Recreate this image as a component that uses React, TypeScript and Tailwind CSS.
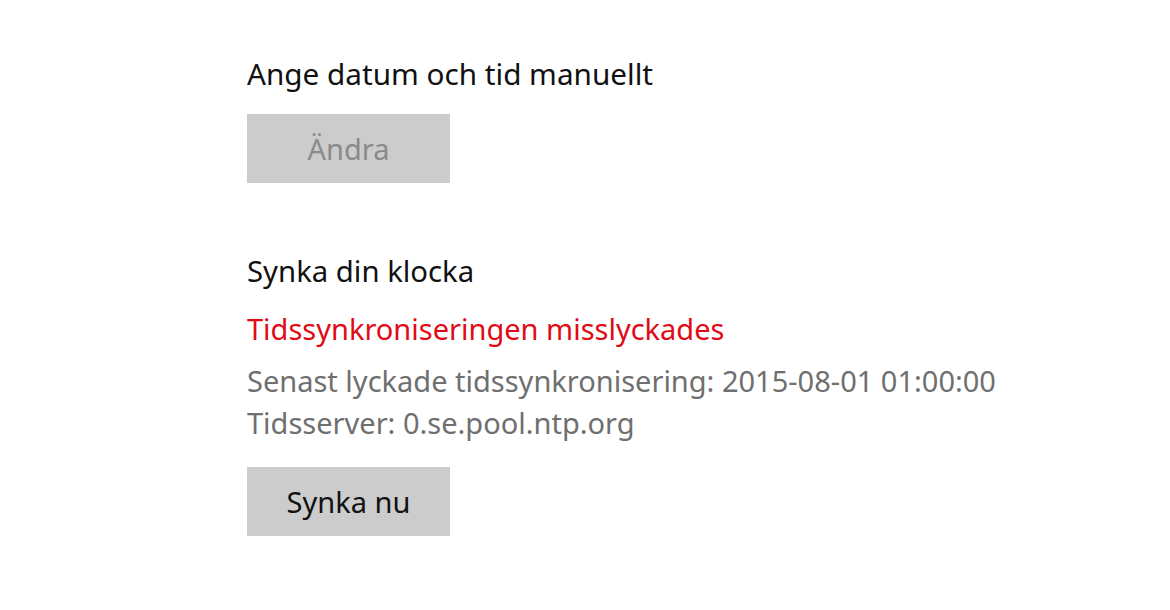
const App = () => {
  return (
    <div
      className="w-[1170px] h-[610px] bg-white pl-[247px] pt-[56px]"
      style={{ fontFamily: '"Noto Sans", "Open Sans", sans-serif' }}
    >
      <h2 className="text-[29.7px] leading-[36px] text-[#111]">Ange datum och tid manuellt</h2>
      <button
        disabled
        className="mt-[22px] w-[203px] h-[69px] bg-[#cccccc] text-[29px] text-[#8a8a8a] flex items-center justify-center"
      >
        Ändra
      </button>

      <h2 className="mt-[70px] text-[29.3px] leading-[36px] text-[#111]">Synka din klocka</h2>
      <p className="mt-[22px] text-[29px] leading-[36px] text-[#e00b16]">Tidssynkroniseringen misslyckades</p>

      <div className="mt-[13px] text-[29px] leading-[42px] text-[#6f6f6f]">
        <p>Senast lyckade tidssynkronisering: 2015-08-01 01:00:00</p>
        <p>Tidsserver: 0.se.pool.ntp.org</p>
      </div>

      <button className="mt-[23px] w-[203px] h-[69px] bg-[#cccccc] text-[29px] text-[#111] flex items-center justify-center">
        Synka nu
      </button>
    </div>
  );
};

export default App;
